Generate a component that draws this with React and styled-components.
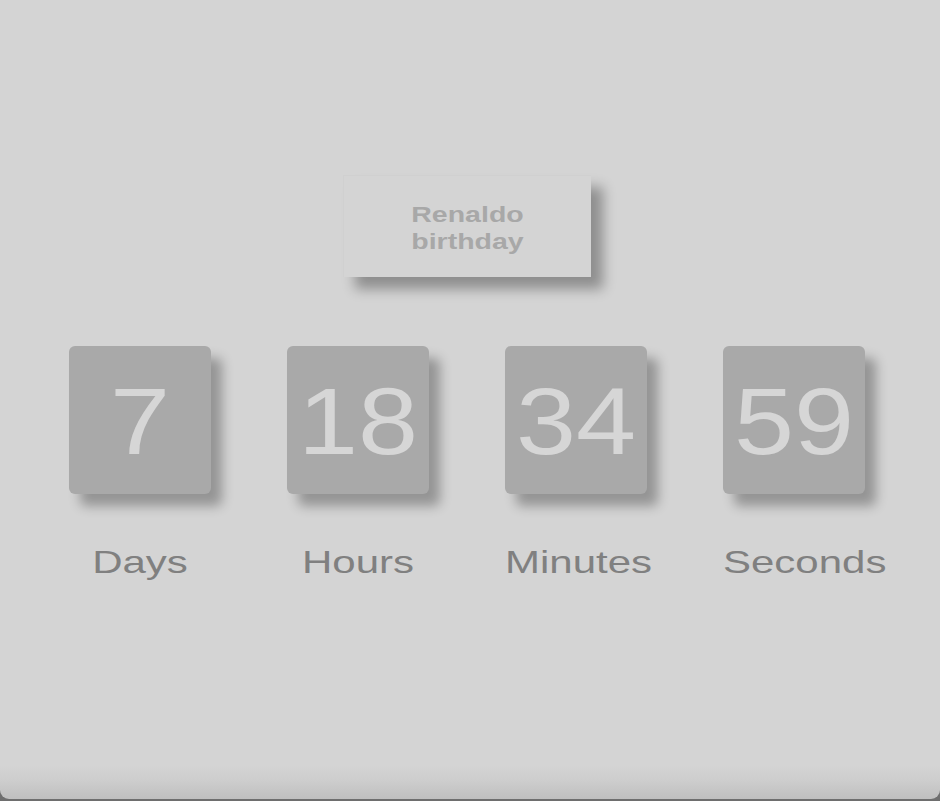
import React from "react";
import styled, { createGlobalStyle } from "styled-components";

const Global = createGlobalStyle`
  html, body { margin: 0; padding: 0; }
  body {
    background: #6e6e6e;
    font-family: "Liberation Sans", Arial, sans-serif;
    overflow: hidden;
  }
`;

const Page = styled.div`
  width: 940px;
  height: 799px;
  background: linear-gradient(
    to bottom,
    #d4d4d4 0,
    #d4d4d4 calc(100% - 34px),
    #cdcdcd calc(100% - 18px),
    #bfbfbf 100%
  );
  border-radius: 0 0 9px 9px;
  display: flex;
  flex-direction: column;
  align-items: center;
  padding-top: 175px;
  box-sizing: border-box;
`;

const TitleCard = styled.div`
  width: 248px;
  height: 102px;
  margin-right: 6px;
  background: #d4d4d4;
  box-shadow: 12px 12px 12px rgba(0, 0, 0, 0.33);
  border-top: 1px solid rgba(0, 0, 0, 0.015);
  border-left: 1px solid rgba(0, 0, 0, 0.015);
  box-sizing: border-box;
  display: flex;
  align-items: center;
  justify-content: center;
`;

const Title = styled.div`
  font-size: 28.5px;
  font-weight: 700;
  line-height: 35px;
  color: #a8a8a8;
  text-align: center;
  transform: scaleY(0.775);
  padding-top: 4px;
`;

const Countdown = styled.div`
  align-self: stretch;
  margin-top: 69px;
  padding-left: 69px;
  display: grid;
  grid-template-columns: repeat(4, 218px);
  align-items: start;
`;

const Unit = styled.div`
  display: inline-flex;
  flex-direction: column;
  align-items: center;
  justify-self: start;
`;

const Tile = styled.div`
  align-self: flex-start;
  width: 142px;
  height: 148px;
  border-radius: 6px;
  background: #a9a9a9;
  box-shadow: 11px 12px 12px rgba(0, 0, 0, 0.3);
  display: flex;
  align-items: center;
  justify-content: center;
  padding-top: 4px;
  box-sizing: border-box;
`;

const Digits = styled.span`
  font-size: 108px;
  line-height: 1;
  font-weight: 400;
  color: #d6d6d6;
  transform: scaleY(0.867);
  white-space: nowrap;
`;

const Label = styled.div`
  margin-top: 49px;
  font-size: 42px;
  line-height: 50px;
  color: #808080;
  white-space: nowrap;
  transform: scaleY(0.76);
  transform-origin: top center;
`;

const units = [
  { value: "7", label: "Days" },
  { value: "18", label: "Hours" },
  { value: "34", label: "Minutes" },
  { value: "59", label: "Seconds" },
];

export default function App() {
  return (
    <>
      <Global />
      <Page>
        <TitleCard>
          <Title>
            Renaldo
            <br />
            birthday
          </Title>
        </TitleCard>
        <Countdown>
          {units.map((u) => (
            <Unit key={u.label}>
              <Tile>
                <Digits>{u.value}</Digits>
              </Tile>
              <Label>{u.label}</Label>
            </Unit>
          ))}
        </Countdown>
      </Page>
    </>
  );
}
